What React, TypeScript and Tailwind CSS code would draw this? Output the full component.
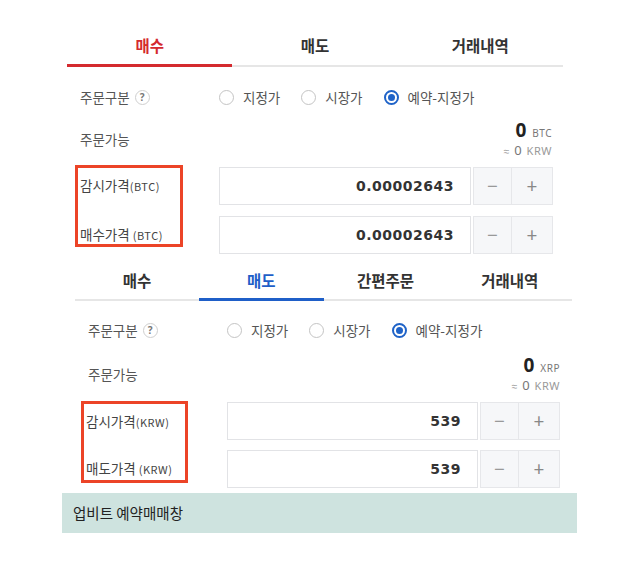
type Tab = { label: string; active?: boolean };

type SectionProps = {
  tabs: Tab[];
  accent: "red" | "blue";
  coin: string;
  unit: string;
  watchLabel: string;
  priceLabel: string;
  value: string;
  offset: "top" | "bottom";
};

const cjk = "font-['Noto_Sans_CJK_KR','Noto_Sans',sans-serif]";

function Radio({ label, checked }: { label: string; checked?: boolean }) {
  return (
    <label className="flex items-center gap-[9px]">
      {checked ? (
        <span className="grid h-[15px] w-[15px] place-items-center rounded-full border-2 border-[#1f63c8]">
          <span className="h-[7px] w-[7px] rounded-full bg-[#1f63c8]" />
        </span>
      ) : (
        <span className="h-[15px] w-[15px] rounded-full border-[1.5px] border-[#c4c4c4]" />
      )}
      <span className="text-[13.5px] text-[#555]">{label}</span>
    </label>
  );
}

function Stepper() {
  return (
    <div className="ml-[2px] flex h-full">
      <button className="grid w-[39px] place-items-center border border-[#e6e7ea] bg-[#f6f7f9] font-['Noto_Sans',sans-serif] text-[19px] text-[#999]">
        −
      </button>
      <button className="grid w-[41px] place-items-center border border-l-0 border-[#e6e7ea] bg-[#f6f7f9] font-['Noto_Sans',sans-serif] text-[19px] text-[#888]">
        +
      </button>
    </div>
  );
}

function PriceInput({ value }: { value: string }) {
  return (
    <div className="flex h-[38px]">
      <div className="flex flex-1 items-center justify-end border border-[#e2e3e6] bg-white pr-[16px]">
        <span className="font-['DejaVu_Sans',sans-serif] text-[14px] font-bold tracking-[0.5px] text-[#333]">
          {value}
        </span>
      </div>
      <Stepper />
    </div>
  );
}

function OrderSection({ tabs, accent, coin, unit, watchLabel, priceLabel, value, offset }: SectionProps) {
  const top = offset === "top";
  const activeTab =
    accent === "red" ? "border-b-[3px] border-[#d42a2f] text-[#d42a2f]" : "border-b-[3px] border-[#1f5fc8] text-[#1f5fc8]";

  return (
    <section className={top ? "ml-[67px] w-[496px]" : "ml-[75px] w-[497px]"}>
      {/* Tabs */}
      <div className="flex">
        {tabs.map((t) => (
          <div
            key={t.label}
            className={[
              "flex flex-1 justify-center text-[15.5px] font-bold",
              top ? "h-[41px] pt-[8px]" : "h-[39px] pt-[7px]",
              t.active ? activeTab : "border-b-2 border-[#e6e6e6] text-[#333]",
            ].join(" ")}
          >
            {t.label}
          </div>
        ))}
      </div>

      {/* 주문구분 */}
      <div className={["flex items-center pl-[13px]", top ? "h-[55px] pt-[5px]" : "h-[56px] pt-[2px]"].join(" ")}>
        <div className="flex w-[139px] items-center gap-[5px]">
          <span className="text-[13.5px] text-[#555]">주문구분</span>
          <span className="grid h-[15px] w-[15px] place-items-center rounded-full border border-[#cfcfcf] font-['Noto_Sans',sans-serif] text-[10px] font-bold leading-none text-[#777]">
            ?
          </span>
        </div>
        <div className="flex items-center gap-[21px]">
          <Radio label="지정가" />
          <Radio label="시장가" />
          <Radio label="예약-지정가" checked />
        </div>
      </div>

      {/* 주문가능 */}
      <div className={["flex h-[34px] items-center justify-between pl-[13px]", top ? "pr-[11px]" : "pr-[12px]"].join(" ")}>
        <span className="text-[13.5px] text-[#555]">주문가능</span>
        <div className="flex flex-col items-end">
          <div className="flex items-baseline gap-[6px] leading-[20px]">
            <span className="font-['Noto_Sans',sans-serif] text-[19px] font-bold text-[#222]">0</span>
            <span className="font-['Noto_Sans',sans-serif] text-[10px] tracking-[0.5px] text-[#777]">{coin}</span>
          </div>
          <div className="flex items-baseline gap-[5px] font-['Noto_Sans',sans-serif] leading-[15px] text-[#999]">
            <span className="text-[10px]">≈</span>
            <span className="text-[13px] text-[#777]">0</span>
            <span className="text-[11px] tracking-[0.5px]">KRW</span>
          </div>
        </div>
      </div>

      {/* 가격 입력 */}
      <div className={["flex", top ? "mt-[9px] pl-[8px] pr-[10px]" : "mt-[10px] pl-[6px] pr-[12px]"].join(" ")}>
        <div
          className={[
            "flex h-[82px] flex-col justify-between border-[3px] border-[#ec4427] pl-[2px] pt-[8px] text-[#444]",
            top ? "w-[108px] pb-0" : "w-[107px] pb-[2px]",
          ].join(" ")}
        >
          <span className="text-[13.5px] leading-[18px]">
            {watchLabel}
            <span className="text-[11px] tracking-[0.5px]">({unit})</span>
          </span>
          <span className="text-[13.5px] leading-[18px]">
            {priceLabel} <span className="text-[11px] tracking-[0.5px]">({unit})</span>
          </span>
        </div>
        <div className={["flex flex-1 flex-col", top ? "ml-[36px] mt-[2px] gap-[11px]" : "ml-[39px] mt-[1px] gap-[10px]"].join(" ")}>
          <PriceInput value={value} />
          <PriceInput value={value} />
        </div>
      </div>
    </section>
  );
}

export default function App() {
  return (
    <div className={`${cjk} h-[578px] w-[630px] bg-white pt-[26px]`}>
      <OrderSection
        offset="top"
        accent="red"
        tabs={[{ label: "매수", active: true }, { label: "매도" }, { label: "거래내역" }]}
        coin="BTC"
        unit="BTC"
        watchLabel="감시가격"
        priceLabel="매수가격"
        value="0.00002643"
      />
      <div className="h-[8px]" />
      <OrderSection
        offset="bottom"
        accent="blue"
        tabs={[{ label: "매수" }, { label: "매도", active: true }, { label: "간편주문" }, { label: "거래내역" }]}
        coin="XRP"
        unit="KRW"
        watchLabel="감시가격"
        priceLabel="매도가격"
        value="539"
      />
      <div className="ml-[62px] mt-[5px] flex h-[40px] w-[515px] items-center bg-[#cee3df] pl-[11px] text-[14.5px] text-[#222]">
        업비트 예약매매창
      </div>
    </div>
  );
}
